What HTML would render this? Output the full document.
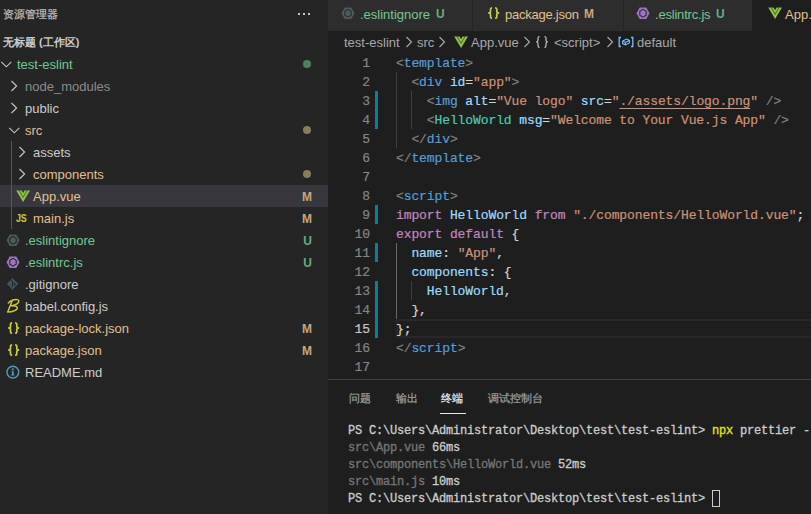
<!DOCTYPE html>
<html><head><meta charset="utf-8">
<style>
*{margin:0;padding:0;box-sizing:border-box}
html,body{width:811px;height:514px;overflow:hidden;background:#252526}
body{position:relative;font-family:"Liberation Sans",sans-serif;font-size:13px;color:#cccccc}
.a{position:absolute}
.ic{position:absolute}
.jsi{font-weight:bold;font-size:10.5px;line-height:11px;color:#cbcb41;letter-spacing:-0.2px;transform:scaleX(0.85);transform-origin:0 0}
.sb{left:0;top:0;width:328px;height:514px;background:#252526}
.hdr{left:3px;top:6px;font-size:11px;-webkit-text-stroke:0.25px currentColor;line-height:16px;color:#bbbbbb;white-space:pre}
.ws{left:3px;top:34px;font-size:11px;line-height:16px;font-weight:bold;color:#cccccc;white-space:pre}
.row{position:absolute;left:0;width:328px;height:22px;line-height:22px;white-space:pre}
.row .t{position:absolute;top:1px}
.row .dec{position:absolute;top:1px;right:16px;font-weight:bold;font-size:12px}
.sel{background:#37373d}
.dot{position:absolute;left:303px;top:7px;width:8px;height:8px;border-radius:50%}
.ed{left:328px;top:0;width:483px;height:514px;background:#1e1e1e}
.tabs{left:328px;top:0;width:483px;height:31px;background:#252526}
.tab{position:absolute;top:0;height:31px;background:#2d2d2d;line-height:30px;white-space:pre}
.tab.act{background:#1e1e1e}
.tab .t{position:absolute;top:0}
.tab .td{font-weight:bold;font-size:12px;line-height:28px}
.bc{left:328px;top:31px;width:483px;height:22px;line-height:22px;white-space:pre;color:#a9a9a9}
.bc span{position:absolute;top:1px}
.code{left:328px;top:53px;width:483px;height:326px;overflow:hidden;font-family:"Liberation Mono",monospace;font-size:13px;letter-spacing:-0.1px;-webkit-text-stroke:0.2px currentColor}
.cur{color:#c6c6c6 !important}
.ln{position:absolute;left:0;width:42px;text-align:right;color:#858585;height:19px;line-height:19px}
.cl{position:absolute;left:68px;height:19px;line-height:19px;white-space:pre;color:#d4d4d4}
.g{position:absolute;left:47px;width:3px;background:#0c7d9d}
.ig{position:absolute;width:1px;background:#404040}
u{text-decoration-skip-ink:none;text-underline-offset:3px}
.p{color:#808080}.tg{color:#569cd6}.at{color:#9cdcfe}.s{color:#ce9178}.k{color:#c586c0}.v{color:#9cdcfe}.c{color:#4ec9b0}.b{color:#d8d4c4}
.panel{left:328px;top:379px;width:483px;height:135px;background:#1e1e1e;border-top:1px solid #414141}
.ptab{position:absolute;top:10px;font-size:11px;-webkit-text-stroke:0.25px currentColor;line-height:16px;color:#9d9d9d;white-space:pre}
.term{position:absolute;-webkit-text-stroke:0.3px currentColor;left:20px;font-family:"Liberation Mono",monospace;font-size:12px;letter-spacing:-0.2px;line-height:17px;white-space:pre;color:#cccccc}
</style></head><body>
<div class="a sb">
  <div class="a hdr">资源管理器</div>
  <div class="a" style="left:298px;top:13px;width:2px;height:2px;background:#c5c5c5"></div>
  <div class="a" style="left:303px;top:13px;width:2px;height:2px;background:#c5c5c5"></div>
  <div class="a" style="left:308px;top:13px;width:2px;height:2px;background:#c5c5c5"></div>
  <div class="a ws">无标题 (工作区)</div>
  <div class="row" style="top:53px"><svg class="ic" style="left:0px;top:0" width="14" height="22"><path d="M1.3 8.8 L6.3 13.8 L11.3 8.8" stroke="#c5c5c5" stroke-width="1.15" fill="none"/></svg><span class="t" style="left:17px;color:#73c991">test-eslint</span><div class="dot" style="background:#4e7f5e"></div></div>
<div class="row" style="top:75px"><svg class="ic" style="left:8px;top:0" width="10" height="22"><path d="M3.5 6 L8.6 11 L3.5 16" stroke="#c5c5c5" stroke-width="1.15" fill="none"/></svg><span class="t" style="left:25px;color:#8c8c8c">node_modules</span></div>
<div class="row" style="top:97px"><svg class="ic" style="left:8px;top:0" width="10" height="22"><path d="M3.5 6 L8.6 11 L3.5 16" stroke="#c5c5c5" stroke-width="1.15" fill="none"/></svg><span class="t" style="left:25px;color:#cccccc">public</span></div>
<div class="row" style="top:119px"><svg class="ic" style="left:8px;top:0" width="14" height="22"><path d="M1.3 8.8 L6.3 13.8 L11.3 8.8" stroke="#c5c5c5" stroke-width="1.15" fill="none"/></svg><span class="t" style="left:25px;color:#e2c08d">src</span><div class="dot" style="background:#8a7a5e"></div></div>
<div class="row" style="top:141px"><svg class="ic" style="left:16px;top:0" width="10" height="22"><path d="M3.5 6 L8.6 11 L3.5 16" stroke="#c5c5c5" stroke-width="1.15" fill="none"/></svg><span class="t" style="left:33px;color:#cccccc">assets</span></div>
<div class="row" style="top:163px"><svg class="ic" style="left:16px;top:0" width="10" height="22"><path d="M3.5 6 L8.6 11 L3.5 16" stroke="#c5c5c5" stroke-width="1.15" fill="none"/></svg><span class="t" style="left:33px;color:#e2c08d">components</span><div class="dot" style="background:#8a7a5e"></div></div>
<div class="row sel" style="top:185px"><svg class="ic" style="left:16px;top:5px" width="15" height="13" viewBox="0 0 15 13"><polygon points="0.2,0.4 5.6,0.4 7.1,3.0 8.6,0.4 14,0.4 7.1,12" fill="#8dc149"/><polyline points="3.0,0.2 7.1,7.4 11.2,0.2" fill="none" stroke="#253318" stroke-width="0.8" stroke-opacity="0.75"/></svg><span class="t" style="left:33px;color:#e2c08d">App.vue</span><span class="dec" style="color:#c4a77c">M</span></div>
<div class="row" style="top:207px"><span class="ic jsi" style="left:16px;top:6px">JS</span><span class="t" style="left:33px;color:#e2c08d">main.js</span><span class="dec" style="color:#c4a77c">M</span></div>
<div class="row" style="top:229px"><svg class="ic" style="left:6px;top:5px" width="14" height="13" viewBox="0 0 14 13"><polygon points="0.5,6.25 3.75,0.5 10.25,0.5 13.5,6.25 10.25,12 3.75,12" fill="#4d5a5e"/><polygon points="7,2.4 10.2,4.3 10.2,8.2 7,10.1 3.8,8.2 3.8,4.3" fill="#4d5a5e" stroke="#252526" stroke-width="1.1"/></svg><span class="t" style="left:25px;color:#73c991">.eslintignore</span><span class="dec" style="color:#63ad7e">U</span></div>
<div class="row" style="top:251px"><svg class="ic" style="left:6px;top:5px" width="14" height="13" viewBox="0 0 14 13"><polygon points="0.5,6.25 3.75,0.5 10.25,0.5 13.5,6.25 10.25,12 3.75,12" fill="#a074c4"/><polygon points="7,2.4 10.2,4.3 10.2,8.2 7,10.1 3.8,8.2 3.8,4.3" fill="#a074c4" stroke="#252526" stroke-width="1.1"/></svg><span class="t" style="left:25px;color:#73c991">.eslintrc.js</span><span class="dec" style="color:#63ad7e">U</span></div>
<div class="row" style="top:273px"><svg class="ic" style="left:6px;top:0px" width="14" height="18" viewBox="0 0 14 18"><polygon points="0.9,10.7 6.4,4.9 12.4,10.7 6.4,16.8" fill="#41535b"/><path d="M4.6 6.7 L6.4 8.5 L6.4 14.2 M6.4 9 L8.7 11.3" stroke="#252526" stroke-width="1" fill="none"/><circle cx="8.8" cy="11.4" r="0.9" fill="#252526"/></svg><span class="t" style="left:25px;color:#cccccc">.gitignore</span></div>
<div class="row" style="top:295px"><svg class="ic" style="left:6px;top:2px" width="15" height="17" viewBox="0 0 15 17"><path d="M2.3 6 Q6 2.4 11 2.6 Q13.6 3 12.4 5.4 Q11 7.6 5.6 8.8 Q12.2 8.4 11.2 11.6 Q9.8 14.4 1.6 15.1 M6.4 3 Q4.2 9 1.7 15" fill="none" stroke="#cbcb41" stroke-width="1.45" stroke-linecap="round" stroke-linejoin="round"/></svg><span class="t" style="left:25px;color:#cccccc">babel.config.js</span></div>
<div class="row" style="top:317px"><svg class="ic" style="left:7px;top:4px" width="14" height="14" viewBox="0 0 14 14"><path d="M5.1 1.8 Q3.5 1.8 3.5 3.5 V5.6 Q3.5 7 1.1 7 Q3.5 7 3.5 8.4 V10.5 Q3.5 12.2 5.1 12.2" fill="none" stroke="#cbcb41" stroke-width="1.7"/><path d="M8.1 1.8 Q9.8 1.8 9.8 3.5 V5.6 Q9.8 7 12.2 7 Q9.8 7 9.8 8.4 V10.5 Q9.8 12.2 8.1 12.2" fill="none" stroke="#cbcb41" stroke-width="1.7"/></svg><span class="t" style="left:25px;color:#e2c08d">package-lock.json</span><span class="dec" style="color:#c4a77c">M</span></div>
<div class="row" style="top:339px"><svg class="ic" style="left:7px;top:4px" width="14" height="14" viewBox="0 0 14 14"><path d="M5.1 1.8 Q3.5 1.8 3.5 3.5 V5.6 Q3.5 7 1.1 7 Q3.5 7 3.5 8.4 V10.5 Q3.5 12.2 5.1 12.2" fill="none" stroke="#cbcb41" stroke-width="1.7"/><path d="M8.1 1.8 Q9.8 1.8 9.8 3.5 V5.6 Q9.8 7 12.2 7 Q9.8 7 9.8 8.4 V10.5 Q9.8 12.2 8.1 12.2" fill="none" stroke="#cbcb41" stroke-width="1.7"/></svg><span class="t" style="left:25px;color:#e2c08d">package.json</span><span class="dec" style="color:#c4a77c">M</span></div>
<div class="row" style="top:361px"><svg class="ic" style="left:6px;top:4px" width="15" height="15" viewBox="0 0 15 15"><circle cx="6.85" cy="7.1" r="5.9" fill="none" stroke="#519aba" stroke-width="1.4"/><circle cx="6.8" cy="4.4" r="1.05" fill="#519aba"/><path d="M5.3 6.2 H7.7 V9.6 H8.5 V10.5 H5.2 V9.6 H6 V7 H5.3 Z" fill="#519aba"/></svg><span class="t" style="left:25px;color:#cccccc">README.md</span></div>
  <div class="a" style="left:11px;top:141px;width:1px;height:88px;background:#585858"></div>
</div>
<div class="a ed"></div>
<div class="a tabs">
  <div class="tab" style="left:0;width:144px"><svg class="ic" style="left:13px;top:7px" width="14" height="13" viewBox="0 0 14 13"><polygon points="0.5,6.25 3.75,0.5 10.25,0.5 13.5,6.25 10.25,12 3.75,12" fill="#4d5a5e"/><polygon points="7,2.4 10.2,4.3 10.2,8.2 7,10.1 3.8,8.2 3.8,4.3" fill="#4d5a5e" stroke="#2d2d2d" stroke-width="1.1"/></svg><span class="t" style="left:32px;color:#73c991">.eslintignore</span><span class="t td" style="left:108px;color:#63ad7e">U</span></div>
  <div class="tab" style="left:145px;width:150px"><svg class="ic" style="left:14px;top:6px" width="14" height="14" viewBox="0 0 14 14"><path d="M5.1 1.8 Q3.5 1.8 3.5 3.5 V5.6 Q3.5 7 1.1 7 Q3.5 7 3.5 8.4 V10.5 Q3.5 12.2 5.1 12.2" fill="none" stroke="#cbcb41" stroke-width="1.7"/><path d="M8.1 1.8 Q9.8 1.8 9.8 3.5 V5.6 Q9.8 7 12.2 7 Q9.8 7 9.8 8.4 V10.5 Q9.8 12.2 8.1 12.2" fill="none" stroke="#cbcb41" stroke-width="1.7"/></svg><span class="t" style="left:32px;color:#e2c08d;letter-spacing:-0.25px">package.json</span><span class="t td" style="left:111px;color:#c4a77c">M</span></div>
  <div class="tab" style="left:296px;width:128px"><svg class="ic" style="left:12px;top:7px" width="14" height="13" viewBox="0 0 14 13"><polygon points="0.5,6.25 3.75,0.5 10.25,0.5 13.5,6.25 10.25,12 3.75,12" fill="#a074c4"/><polygon points="7,2.4 10.2,4.3 10.2,8.2 7,10.1 3.8,8.2 3.8,4.3" fill="#a074c4" stroke="#2d2d2d" stroke-width="1.1"/></svg><span class="t" style="left:31px;color:#73c991;letter-spacing:-0.2px">.eslintrc.js</span><span class="t td" style="left:92px;color:#63ad7e">U</span></div>
  <div class="tab act" style="left:424px;width:59px"><svg class="ic" style="left:16px;top:7px" width="15" height="13" viewBox="0 0 15 13"><polygon points="0.2,0.4 5.6,0.4 7.1,3.0 8.6,0.4 14,0.4 7.1,12" fill="#8dc149"/><polyline points="3.0,0.2 7.1,7.4 11.2,0.2" fill="none" stroke="#253318" stroke-width="0.8" stroke-opacity="0.75"/></svg><span class="t" style="left:33px;color:#e2c08d">App.vue</span></div>
</div>
<div class="a bc">
  <span style="left:16px">test-eslint</span><svg class="ic" style="left:77px;top:5px" width="8" height="12"><path d="M1.5 1 L6.5 6 L1.5 11" stroke="#a9a9a9" stroke-width="1.1" fill="none"/></svg>
  <span style="left:89px">src</span><svg class="ic" style="left:110px;top:5px" width="8" height="12"><path d="M1.5 1 L6.5 6 L1.5 11" stroke="#a9a9a9" stroke-width="1.1" fill="none"/></svg>
  <svg class="ic" style="left:126px;top:5px" width="15" height="13" viewBox="0 0 15 13"><polygon points="0.2,0.4 5.6,0.4 7.1,3.0 8.6,0.4 14,0.4 7.1,12" fill="#8dc149"/><polyline points="3.0,0.2 7.1,7.4 11.2,0.2" fill="none" stroke="#253318" stroke-width="0.8" stroke-opacity="0.75"/></svg>
  <span style="left:143px">App.vue</span><svg class="ic" style="left:195px;top:5px" width="8" height="12"><path d="M1.5 1 L6.5 6 L1.5 11" stroke="#a9a9a9" stroke-width="1.1" fill="none"/></svg>
  <svg class="ic" style="left:207px;top:4px" width="14" height="14" viewBox="0 0 14 14"><path d="M4.6 1.5 Q3 1.5 3 3.2 V5.6 Q3 6.9 1.2 7 Q3 7.1 3 8.4 V10.8 Q3 12.5 4.6 12.5" fill="none" stroke="#c5c5c5" stroke-width="1.2"/><path d="M9.4 1.5 Q11 1.5 11 3.2 V5.6 Q11 6.9 12.8 7 Q11 7.1 11 8.4 V10.8 Q11 12.5 9.4 12.5" fill="none" stroke="#c5c5c5" stroke-width="1.2"/></svg>
  <span style="left:226px">&lt;script&gt;</span><svg class="ic" style="left:278px;top:5px" width="8" height="12"><path d="M1.5 1 L6.5 6 L1.5 11" stroke="#a9a9a9" stroke-width="1.1" fill="none"/></svg>
  <svg class="ic" style="left:290px;top:5px" width="16" height="12" viewBox="0 0 16 12"><path d="M3 1.5 H1.2 V10.5 H3 M13 1.5 H14.8 V10.5 H13" fill="none" stroke="#75beff" stroke-width="1.3"/><path d="M4.6 5 L8.6 3 L11.4 4.4 L11.4 7 L7.4 9 L4.6 7.6 Z M4.6 5 L7.4 6.4 L11.4 4.4 M7.4 6.4 L7.4 9" fill="none" stroke="#75beff" stroke-width="1.1"/></svg>
  <span style="left:309px">default</span>
</div>
<div class="a code">
<div class="a" style="left:68px;top:266px;width:415px;height:19px;border:2px solid #282828;border-right:none"></div>
<div class="ln" style="top:1px">1</div>
<div class="cl" style="top:1px"><span class="p">&lt;</span><span class="tg">template</span><span class="p">&gt;</span></div>
<div class="ln" style="top:20px">2</div>
<div class="cl" style="top:20px">  <span class="p">&lt;</span><span class="tg">div</span> <span class="at">id</span>=<span class="s">"app"</span><span class="p">&gt;</span></div>
<div class="ln" style="top:39px">3</div>
<div class="cl" style="top:39px">    <span class="p">&lt;</span><span class="tg">img</span> <span class="at">alt</span>=<span class="s">"Vue logo"</span> <span class="at">src</span>=<span class="s">"<u>./assets/logo.png</u>"</span> <span class="p">/&gt;</span></div>
<div class="ln" style="top:58px">4</div>
<div class="cl" style="top:58px">    <span class="p">&lt;</span><span class="c">HelloWorld</span> <span class="at">msg</span>=<span class="s">"Welcome to Your Vue.js App"</span> <span class="p">/&gt;</span></div>
<div class="ln" style="top:77px">5</div>
<div class="cl" style="top:77px">  <span class="p">&lt;/</span><span class="tg">div</span><span class="p">&gt;</span></div>
<div class="ln" style="top:96px">6</div>
<div class="cl" style="top:96px"><span class="p">&lt;/</span><span class="tg">template</span><span class="p">&gt;</span></div>
<div class="ln" style="top:115px">7</div>
<div class="cl" style="top:115px"></div>
<div class="ln" style="top:134px">8</div>
<div class="cl" style="top:134px"><span class="p">&lt;</span><span class="tg">script</span><span class="p">&gt;</span></div>
<div class="ln" style="top:153px">9</div>
<div class="cl" style="top:153px"><span class="k">import</span> <span class="v">HelloWorld</span> <span class="k">from</span> <span class="s">"./components/HelloWorld.vue"</span>;</div>
<div class="ln" style="top:172px">10</div>
<div class="cl" style="top:172px"><span class="k">export</span> <span class="k">default</span> <span class="b">{</span></div>
<div class="ln" style="top:191px">11</div>
<div class="cl" style="top:191px">  <span class="v">name</span>: <span class="s">"App"</span>,</div>
<div class="ln" style="top:210px">12</div>
<div class="cl" style="top:210px">  <span class="v">components</span>: <span class="b">{</span></div>
<div class="ln" style="top:229px">13</div>
<div class="cl" style="top:229px">    <span class="v">HelloWorld</span>,</div>
<div class="ln" style="top:248px">14</div>
<div class="cl" style="top:248px">  <span class="b">}</span>,</div>
<div class="ln cur" style="top:267px">15</div>
<div class="cl" style="top:267px"><span class="b">}</span>;</div>
<div class="ln" style="top:286px">16</div>
<div class="cl" style="top:286px"><span class="p">&lt;/</span><span class="tg">script</span><span class="p">&gt;</span></div>
<div class="ln" style="top:305px">17</div>
<div class="cl" style="top:305px"></div>
<div class="g" style="top:38px;height:38px"></div>
<div class="g" style="top:152px;height:19px"></div>
<div class="g" style="top:190px;height:19px"></div>
<div class="g" style="top:228px;height:57px"></div>
<div class="ig" style="left:68px;top:19px;height:76px;background:#404040"></div>
<div class="ig" style="left:83px;top:38px;height:38px;background:#404040"></div>
<div class="ig" style="left:68px;top:190px;height:76px;background:#686868"></div>
<div class="ig" style="left:83px;top:228px;height:19px;background:#404040"></div>
</div>
<div class="a panel">
  <div class="ptab" style="left:21px">问题</div>
  <div class="ptab" style="left:68px">输出</div>
  <div class="ptab" style="left:113px;color:#e7e7e7">终端</div>
  <div class="ptab" style="left:160px">调试控制台</div>
  <div class="a" style="left:112px;top:33px;width:26px;height:1px;background:#e7e7e7"></div>
  <div class="term" style="top:43px">PS C:\Users\Administrator\Desktop\test\test-eslint&gt; <span style="color:#e5e510">npx</span> prettier --write src</div>
  <div class="term" style="top:60px"><span style="color:#767676">src\App.vue</span> 66ms</div>
  <div class="term" style="top:77px"><span style="color:#767676">src\components\HelloWorld.vue</span> 52ms</div>
  <div class="term" style="top:94px"><span style="color:#767676">src\main.js</span> 10ms</div>
  <div class="term" style="top:111px">PS C:\Users\Administrator\Desktop\test\test-eslint&gt; </div>
  <div class="a" style="left:384px;top:110px;width:8px;height:17px;border:1px solid #cccccc"></div>
</div>
</body></html>
